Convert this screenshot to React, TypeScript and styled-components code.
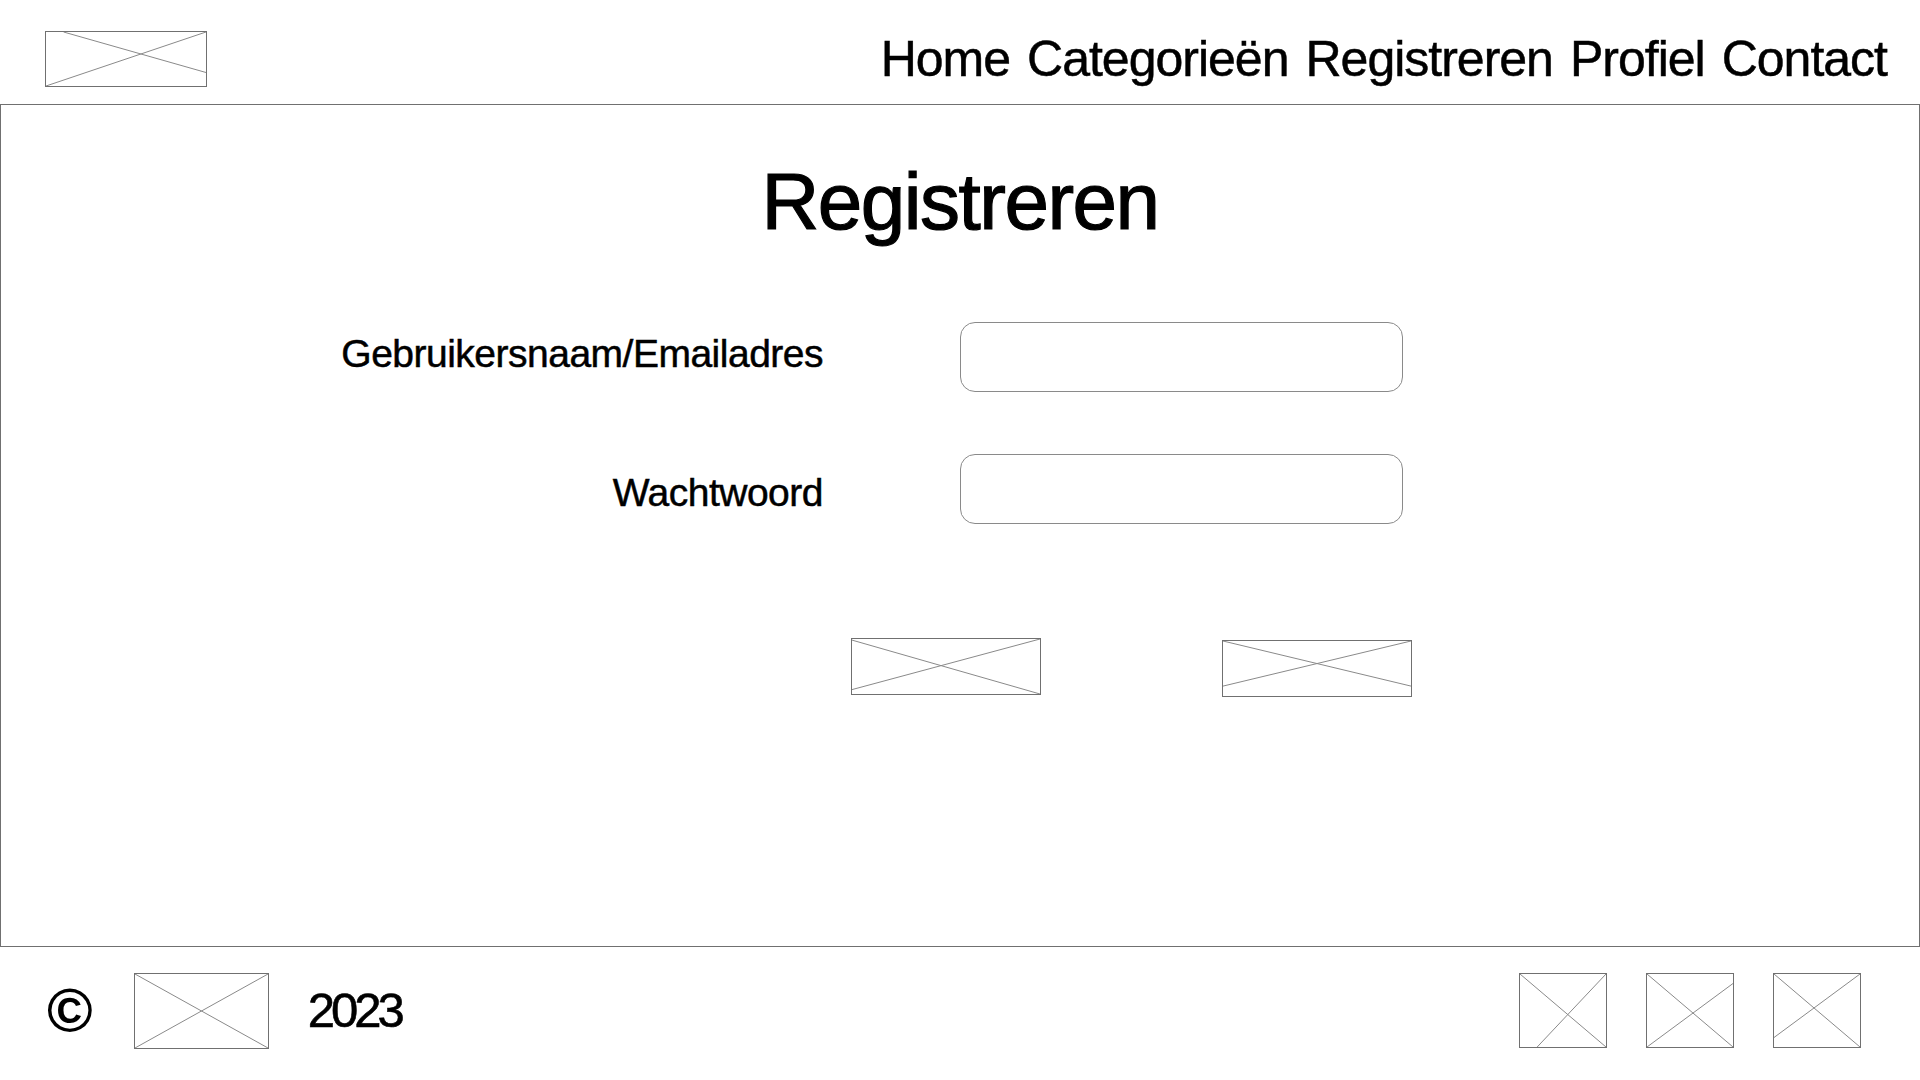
import styled, { createGlobalStyle } from "styled-components";

const GlobalStyle = createGlobalStyle`
  body {
    margin: 0;
    background: #ffffff;
    font-family: "Liberation Sans", Arial, sans-serif;
    color: #000000;
  }
`;

type Line = [number, number, number, number];

const Placeholder = ({ w, h, lines }: { w: number; h: number; lines: Line[] }) => (
  <PlaceholderBox $w={w} $h={h}>
    <svg width="100%" height="100%" viewBox="0 0 100 100" preserveAspectRatio="none">
      {lines.map(([x1, y1, x2, y2], i) => (
        <line
          key={i}
          x1={x1}
          y1={y1}
          x2={x2}
          y2={y2}
          stroke="#8a8a8a"
          strokeWidth="1"
          vectorEffect="non-scaling-stroke"
        />
      ))}
    </svg>
  </PlaceholderBox>
);

const cross: Line[] = [
  [0, 0, 100, 100],
  [0, 100, 100, 0],
];

const navItems = ["Home", "Categorieën", "Registreren", "Profiel", "Contact"];

const App = () => {
  return (
    <Page>
      <GlobalStyle />
      <Header>
        <Placeholder
          w={162}
          h={56}
          lines={[
            [11, 0, 100, 75],
            [0, 100, 100, 0],
          ]}
        />
        <Nav>
          {navItems.map((item) => (
            <NavLink key={item} href="#">
              {item}
            </NavLink>
          ))}
        </Nav>
      </Header>

      <Main>
        <Title>Registreren</Title>
        <Form>
          <Label htmlFor="user" $shift={-4}>
            Gebruikersnaam/Emailadres
          </Label>
          <Input id="user" type="text" />
          <Label htmlFor="pass" $shift={3}>
            Wachtwoord
          </Label>
          <Input id="pass" type="password" />
        </Form>
        <Buttons>
          <Placeholder
            w={190}
            h={57}
            lines={[
              [0, 2, 100, 100],
              [0, 92, 100, 0],
            ]}
          />
          <ShiftDown>
            <Placeholder
              w={190}
              h={57}
              lines={[
                [0, 0, 100, 82],
                [0, 82, 100, 0],
              ]}
            />
          </ShiftDown>
        </Buttons>
      </Main>

      <Footer>
        <FooterGroup $gap={41}>
          <Copy>©</Copy>
          <Placeholder w={135} h={76} lines={cross} />
          <Year>2023</Year>
        </FooterGroup>
        <FooterGroup $gap={39}>
          <Placeholder
            w={88}
            h={75}
            lines={[
              [0, 0, 100, 100],
              [20, 100, 100, 0],
            ]}
          />
          <Placeholder
            w={88}
            h={75}
            lines={[
              [0, 0, 100, 100],
              [0, 100, 100, 13],
            ]}
          />
          <Placeholder
            w={88}
            h={75}
            lines={[
              [0, 0, 100, 100],
              [0, 87, 100, 0],
            ]}
          />
        </FooterGroup>
      </Footer>
    </Page>
  );
};

const Page = styled.div`
  width: 1920px;
  height: 1080px;
  display: flex;
  flex-direction: column;
  overflow: hidden;
`;

const PlaceholderBox = styled.div<{ $w: number; $h: number }>`
  width: ${(p) => p.$w}px;
  height: ${(p) => p.$h}px;
  border: 1px solid #707070;
  box-sizing: border-box;
  flex-shrink: 0;

  svg {
    display: block;
  }
`;

const Header = styled.header`
  height: 104px;
  box-sizing: border-box;
  padding: 13px 33px 0 45px;
  display: flex;
  align-items: center;
  justify-content: space-between;
`;

const Nav = styled.nav`
  display: flex;
  gap: 17px;
`;

const NavLink = styled.a`
  font-size: 50px;
  line-height: 1;
  letter-spacing: -1px;
  color: #000000;
  text-decoration: none;
  -webkit-text-stroke: 0.5px #000000;
`;

const Main = styled.main`
  height: 843px;
  box-sizing: border-box;
  border: 1px solid #707070;
  padding-top: 57px;
  display: flex;
  flex-direction: column;
`;

const Title = styled.h1`
  margin: 0;
  font-size: 80px;
  line-height: 1;
  font-weight: 400;
  letter-spacing: -1.5px;
  text-align: center;
  -webkit-text-stroke: 1.2px #000000;
`;

const Form = styled.form`
  margin-top: 80px;
  display: grid;
  grid-template-columns: 1fr 1fr;
  row-gap: 62px;
  align-items: center;
`;

const Label = styled.label<{ $shift: number }>`
  font-size: 39px;
  line-height: 1;
  letter-spacing: -0.5px;
  text-align: right;
  padding-right: 137px;
  -webkit-text-stroke: 0.5px #000000;
  margin-top: ${(p) => (p.$shift > 0 ? p.$shift * 2 : 0)}px;
  margin-bottom: ${(p) => (p.$shift < 0 ? -p.$shift * 2 : 0)}px;
`;

const Input = styled.input`
  width: 443px;
  height: 70px;
  box-sizing: border-box;
  border: 1px solid #8a8a8a;
  border-radius: 15px;
  background: #ffffff;
  outline: none;
`;

const Buttons = styled.div`
  margin-top: 114px;
  padding-left: 850px;
  display: flex;
  align-items: flex-start;
  gap: 181px;
`;

const ShiftDown = styled.div`
  padding-top: 2px;
`;

const Footer = styled.footer`
  flex: 1;
  box-sizing: border-box;
  padding: 0 59px 6px 47px;
  display: flex;
  align-items: center;
  justify-content: space-between;
`;

const FooterGroup = styled.div<{ $gap: number }>`
  display: flex;
  align-items: center;
  gap: ${(p) => p.$gap}px;
`;

const Copy = styled.span`
  font-size: 62px;
  line-height: 1;
  font-weight: 700;
`;

const Year = styled.span`
  font-size: 49px;
  line-height: 1;
  letter-spacing: -4px;
  margin-left: -2px;
  -webkit-text-stroke: 0.6px #000000;
`;

export default App;
